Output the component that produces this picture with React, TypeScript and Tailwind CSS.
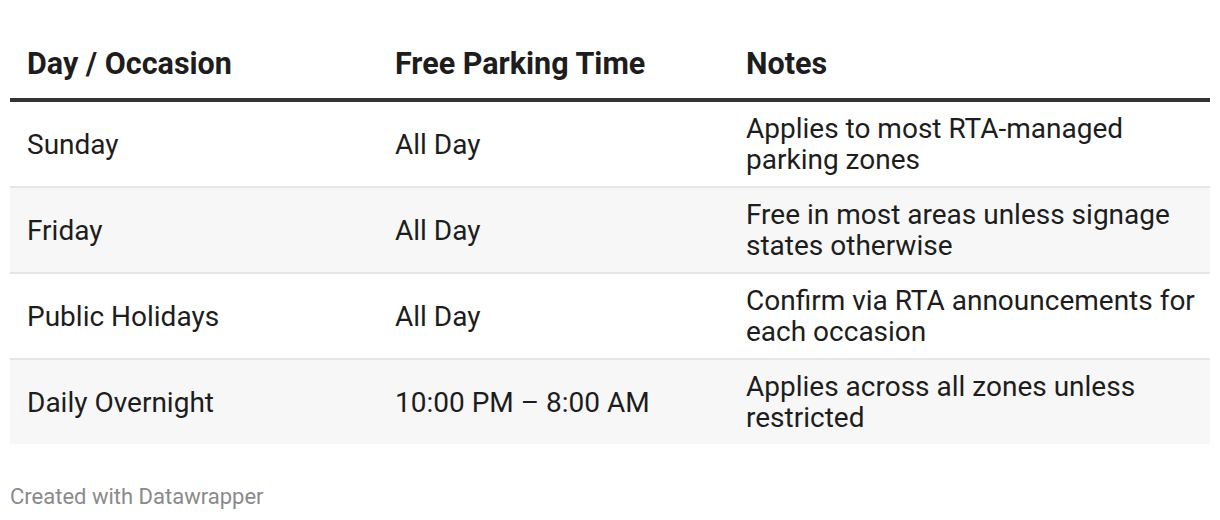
import React from 'react';

interface Row {
  day: string;
  time: string;
  notes: string;
}

const rows: Row[] = [
  { day: 'Sunday', time: 'All Day', notes: 'Applies to most RTA-managed parking zones' },
  { day: 'Friday', time: 'All Day', notes: 'Free in most areas unless signage states otherwise' },
  { day: 'Public Holidays', time: 'All Day', notes: 'Confirm via RTA announcements for each occasion' },
  { day: 'Daily Overnight', time: '10:00 PM – 8:00 AM', notes: 'Applies across all zones unless restricted' },
];

const cols = 'grid grid-cols-[368px_351px_1fr]';

export default function App() {
  return (
    <div
      className="w-[1220px] h-[520px] bg-white px-[10px] text-[#1d1d1d]"
      style={{ fontFamily: 'Roboto, "Liberation Sans", sans-serif' }}
    >
      <div className={`${cols} h-[98px] pt-[30px] items-center text-[30.5px] font-bold leading-[32px]`}>
        <div className="pl-[17px]">Day / Occasion</div>
        <div className="pl-[17px]">Free Parking Time</div>
        <div className="pl-[17px]">Notes</div>
      </div>
      <div className="h-[4px] bg-[#333333]" />
      {rows.map((r, i) => {
        const last = i === rows.length - 1;
        return (
          <div
            key={r.day}
            className={`${cols} items-center text-[28px] leading-[31px] ${i % 2 === 1 ? 'bg-[#f7f7f7]' : 'bg-white'} ${last ? 'h-[84px]' : 'h-[86px] border-b-2 border-[#e6e6e6]'}`}
          >
            <div className="pl-[17px]">{r.day}</div>
            <div className="pl-[17px]">{r.time}</div>
            <div className="pl-[17px] pr-[12px]">{r.notes}</div>
          </div>
        );
      })}
      <div className="mt-[40px] text-[22px] leading-[26px] text-[#8a8a8a]">Created with Datawrapper</div>
    </div>
  );
}
